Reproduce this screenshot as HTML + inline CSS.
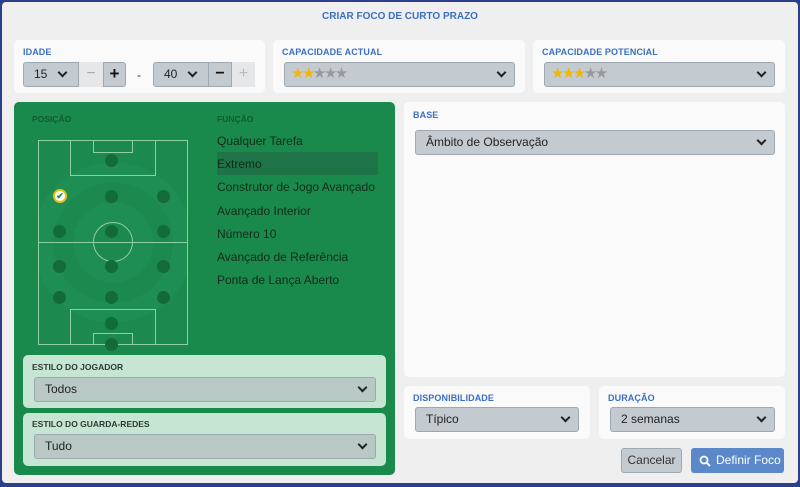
<!DOCTYPE html>
<html><head><style>
*{box-sizing:border-box;margin:0;padding:0}
body{width:800px;height:487px;background:#2c3e8c;font-family:"Liberation Sans",sans-serif;position:relative;overflow:hidden}
.dlg{position:absolute;left:2px;top:2px;width:796px;height:481px;background:#efefef;border-radius:4px}
.a{position:absolute}
.card{position:absolute;background:#fafafa;border-radius:5px}
.lbl{position:absolute;font-size:9px;font-weight:bold;color:#3a6fc4;letter-spacing:.1px}
.sel{position:absolute;background:#c3cbd1;border:1px solid #9ea8b0;border-radius:3px;height:25px;font-size:12px;color:#222;line-height:23px;padding-left:10px}
.chev{position:absolute;right:9px;width:7px;height:7px;border-right:2px solid #222;border-bottom:2px solid #222;transform:rotate(45deg);top:6px}
.pd{position:absolute;width:13px;height:13px;border-radius:50%;background:#146b3a}
.fn{position:absolute;left:217px;font-size:12px;color:#112a1a}
.gl{position:absolute;border:1px solid #8fcfa5}
.st{font-size:15px;letter-spacing:-2.5px;line-height:22px}
</style></head><body>
<div class="dlg"></div>
<div class="a" style="left:0;top:11px;width:800px;text-align:center;font-size:10px;font-weight:bold;color:#3a6fc4">CRIAR FOCO DE CURTO PRAZO</div>

<div class="card" style="left:14px;top:40px;width:251px;height:53px"></div>
<div class="lbl" style="left:23px;top:47px">IDADE</div>
<div class="sel" style="left:23px;top:62px;width:56px;border-radius:3px 0 0 3px">15<div class="chev" style="right:12px"></div></div>
<div class="a" style="left:79px;top:62px;width:24px;height:25px;background:#e6e7e8;color:#aaa;text-align:center;font-size:16px;line-height:24px">−</div>
<div class="a" style="left:103px;top:62px;width:23px;height:25px;background:#c3cbd1;border:1px solid #9ea8b0;border-radius:0 3px 3px 0;color:#111;text-align:center;font-size:17px;font-weight:bold;line-height:22px">+</div>
<div class="a" style="left:137px;top:68px;font-size:12px;color:#333">-</div>
<div class="sel" style="left:153px;top:62px;width:56px;border-radius:3px 0 0 3px">40<div class="chev" style="right:12px"></div></div>
<div class="a" style="left:208px;top:62px;width:24px;height:25px;background:#c3cbd1;border:1px solid #9ea8b0;color:#111;text-align:center;font-size:16px;font-weight:bold;line-height:22px">−</div>
<div class="a" style="left:232px;top:62px;width:23px;height:25px;background:#e6e7e8;color:#bbb;text-align:center;font-size:16px;line-height:24px">+</div>

<div class="card" style="left:273px;top:40px;width:252px;height:53px"></div>
<div class="lbl" style="left:282px;top:47px">CAPACIDADE ACTUAL</div>
<div class="sel" style="left:284px;top:62px;width:231px;padding-left:6px"><span class="st"><span style="color:#f2b705">★★</span><span style="color:#999">★★★</span></span><div class="chev"></div></div>

<div class="card" style="left:533px;top:40px;width:252px;height:53px"></div>
<div class="lbl" style="left:542px;top:47px">CAPACIDADE POTENCIAL</div>
<div class="sel" style="left:544px;top:62px;width:231px;padding-left:6px"><span class="st"><span style="color:#f2b705">★★★</span><span style="color:#999">★★</span></span><div class="chev"></div></div>

<div class="a" style="left:14px;top:102px;width:381px;height:373px;background:#1a8a4c;border-radius:5px"></div>
<div class="a" style="left:32px;top:114px;font-size:8.5px;font-weight:bold;color:#0e5c30">POSIÇÃO</div>
<div class="a" style="left:217px;top:114px;font-size:8.5px;font-weight:bold;color:#0e5c30">FUNÇÃO</div>
<div class="a" style="left:38px;top:140px;width:150px;height:205px;background:radial-gradient(circle at 50% 50%,#1c8a4f 0,#1c8a4f 20px,#1f8e55 20px,#1f8e55 40px,#1c8a4f 40px,#1c8a4f 60px,#1f8e55 60px,#1f8e55 80px,#1c8a4f 80px);border:1px solid #8fcfa5"></div>
<div class="gl" style="left:38px;top:242px;width:150px;height:0;border-width:1px 0 0 0"></div>
<div class="gl" style="left:93px;top:222px;width:40px;height:40px;border-radius:50%"></div>
<div class="gl" style="left:70px;top:140px;width:86px;height:36px"></div>
<div class="gl" style="left:93px;top:140px;width:40px;height:13px"></div>
<div class="gl" style="left:70px;top:309px;width:86px;height:36px"></div>
<div class="gl" style="left:93px;top:333px;width:40px;height:12px"></div>
<div class="pd" style="left:105px;top:154px"></div>
<div class="a" style="left:53px;top:189px;width:14px;height:14px;border-radius:50%;background:#fff;border:2px solid #e3c21a;color:#1a8a4c;font-size:9px;font-weight:bold;text-align:center;line-height:10px">✔</div>
<div class="pd" style="left:105px;top:190px"></div><div class="pd" style="left:157px;top:190px"></div>
<div class="pd" style="left:53px;top:225px"></div><div class="pd" style="left:105px;top:225px"></div><div class="pd" style="left:157px;top:225px"></div>
<div class="pd" style="left:53px;top:260px"></div><div class="pd" style="left:105px;top:260px"></div><div class="pd" style="left:157px;top:260px"></div>
<div class="pd" style="left:53px;top:291px"></div><div class="pd" style="left:105px;top:291px"></div><div class="pd" style="left:157px;top:291px"></div>
<div class="pd" style="left:105px;top:317px"></div><div class="pd" style="left:105px;top:338px"></div>

<div class="a" style="left:217px;top:152px;width:161px;height:23px;background:#1e7447"></div>
<div class="fn" style="top:134px">Qualquer Tarefa</div>
<div class="fn" style="top:157px">Extremo</div>
<div class="fn" style="top:180px">Construtor de Jogo Avançado</div>
<div class="fn" style="top:204px">Avançado Interior</div>
<div class="fn" style="top:227px">Número 10</div>
<div class="fn" style="top:250px">Avançado de Referência</div>
<div class="fn" style="top:273px">Ponta de Lança Aberto</div>

<div class="a" style="left:23px;top:355px;width:363px;height:53px;background:#c6e6d3;border-radius:5px"></div>
<div class="a" style="left:32px;top:362px;font-size:8.5px;font-weight:bold;color:#2c3a33">ESTILO DO JOGADOR</div>
<div class="sel" style="left:34px;top:377px;width:342px;background:#b8c8c5">Todos<div class="chev"></div></div>
<div class="a" style="left:23px;top:413px;width:363px;height:53px;background:#c6e6d3;border-radius:5px"></div>
<div class="a" style="left:32px;top:419px;font-size:8.5px;font-weight:bold;color:#2c3a33">ESTILO DO GUARDA-REDES</div>
<div class="sel" style="left:34px;top:434px;width:342px;background:#b8c8c5">Tudo<div class="chev"></div></div>

<div class="card" style="left:404px;top:102px;width:381px;height:275px"></div>
<div class="lbl" style="left:413px;top:110px">BASE</div>
<div class="sel" style="left:415px;top:130px;width:360px">Âmbito de Observação<div class="chev"></div></div>

<div class="card" style="left:404px;top:386px;width:186px;height:53px"></div>
<div class="lbl" style="left:413px;top:393px">DISPONIBILIDADE</div>
<div class="sel" style="left:415px;top:407px;width:164px">Típico<div class="chev"></div></div>
<div class="card" style="left:599px;top:386px;width:186px;height:53px"></div>
<div class="lbl" style="left:608px;top:393px">DURAÇÃO</div>
<div class="sel" style="left:610px;top:407px;width:165px">2 semanas<div class="chev"></div></div>

<div class="a" style="left:621px;top:448px;width:61px;height:25px;background:#c3cbd1;border:1px solid #9ea8b0;border-radius:3px;font-size:12px;color:#333;text-align:center;line-height:23px">Cancelar</div>
<div class="a" style="left:691px;top:448px;width:93px;height:25px;background:#5a88c8;border-radius:3px;font-size:12px;color:#fff;line-height:25px;padding-left:25px;white-space:nowrap">Definir Foco</div>
<svg class="a" style="left:699px;top:455px" width="12" height="12" viewBox="0 0 12 12"><circle cx="5" cy="5" r="3.5" fill="none" stroke="#fff" stroke-width="1.8"/><path d="M7.5 7.5L11 11" stroke="#fff" stroke-width="2"/></svg>
</body></html>
